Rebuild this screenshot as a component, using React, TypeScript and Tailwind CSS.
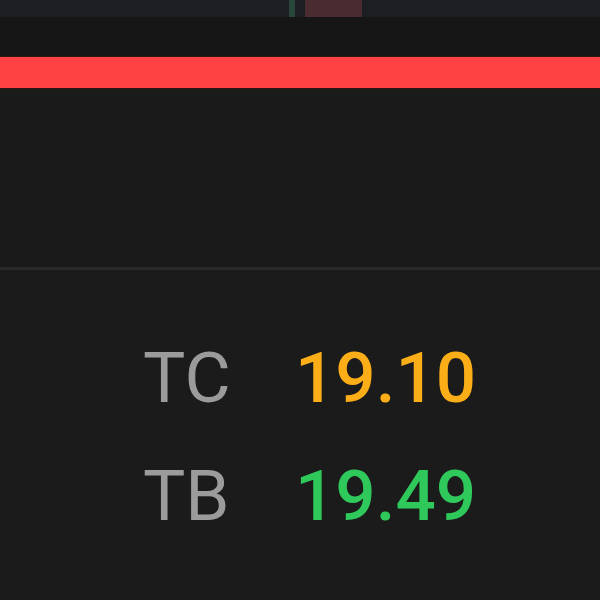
export default function App() {
  const rows = [
    { label: 'TC', value: '19.10', color: 'text-[#fbae17]' },
    { label: 'TB', value: '19.49', color: 'text-[#2fc95b]' },
  ];

  return (
    <div className="w-[600px] h-[600px] overflow-hidden bg-[#1a1a1a] flex flex-col font-['Roboto',sans-serif]">
      {/* chart strip cut off at the top */}
      <div className="h-[17px] bg-[#1d1e21] flex">
        <div className="w-[289px]" />
        <div className="w-[6px] bg-[#27473a]" />
        <div className="w-[10px]" />
        <div className="w-[57px] bg-[#4a2b30]" />
      </div>
      <div className="h-[40px] bg-[#161617] border-b border-[#2a1a16]" />
      <div className="h-[32px] bg-[#fe4244] border-b border-[#2c1512]" />
      <div className="h-[178px] bg-[#1a1a1a]" />
      <div className="h-[3px] bg-[#2a2a2a]" />

      {/* quotes */}
      <div className="flex-1 bg-[#1b1b1b] pt-[49px] pl-[143px]">
        <div className="grid grid-cols-[152px_auto] text-[71px] leading-[118px]">
          {rows.map((r) => (
            <div key={r.label} className="contents">
              <span className="text-[#9b9b9b] font-normal">{r.label}</span>
              <span className={`${r.color} font-medium`}>{r.value}</span>
            </div>
          ))}
        </div>
      </div>
    </div>
  );
}
